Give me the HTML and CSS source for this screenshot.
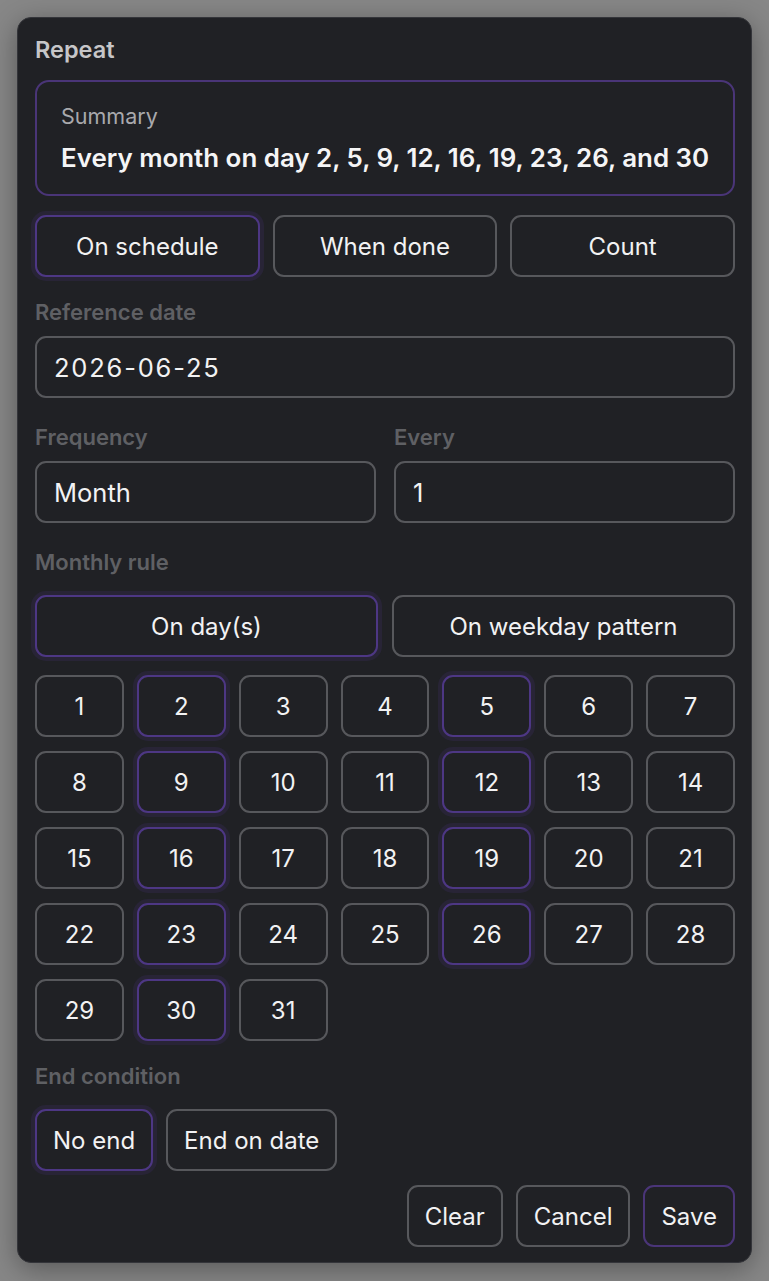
FILE: index.html
```html
<!DOCTYPE html>
<html lang="en">
<head>
  <meta charset="UTF-8" />
  <meta name="viewport" content="width=device-width, initial-scale=1.0" />
  <title>Repeat</title>
  <link rel="stylesheet" href="styles.css">
</head>
<body>
  <div class="dialog">
    <h2 class="title">Repeat</h2>

    <div class="summary">
      <div class="summary-label">Summary</div>
      <div class="summary-text">Every month on day 2, 5, 9, 12, 16, 19, 23, 26, and 30</div>
    </div>

    <div class="seg seg-3 mode">
      <button class="btn active">On schedule</button>
      <button class="btn">When done</button>
      <button class="btn">Count</button>
    </div>

    <div class="field">
      <label class="label">Reference date</label>
      <div class="input date">2026-06-25</div>
    </div>

    <div class="row-2">
      <div class="field">
        <label class="label">Frequency</label>
        <div class="input">Month</div>
      </div>
      <div class="field">
        <label class="label">Every</label>
        <div class="input">1</div>
      </div>
    </div>

    <div class="field">
      <label class="label">Monthly rule</label>
      <div class="seg seg-2 group">
        <button class="btn active">On day(s)</button>
        <button class="btn">On weekday pattern</button>
      </div>
    </div>

    <div class="days" id="days"></div>

    <div class="field end">
      <label class="label">End condition</label>
      <div class="inline group">
        <button class="btn pill active">No end</button>
        <button class="btn pill">End on date</button>
      </div>
    </div>

    <div class="actions">
      <button class="btn pill">Clear</button>
      <button class="btn pill">Cancel</button>
      <button class="btn pill primary">Save</button>
    </div>
  </div>

  <script>
    const days = document.getElementById('days');
    const picked = [2, 5, 9, 12, 16, 19, 23, 26, 30];

    for (let d = 1; d <= 31; d++) {
      const b = document.createElement('button');
      b.className = 'btn day' + (picked.includes(d) ? ' active' : '');
      b.textContent = d;
      days.appendChild(b);
    }
  </script>
</body>
</html>
```

FILE: styles.css
```css
* {
  margin: 0;
  padding: 0;
  box-sizing: border-box;
}

body {
  font-family: 'Inter', 'Noto Sans', sans-serif;
  background: #878787;
  padding: 17px;
  min-height: 100vh;
}

.dialog {
  width: 735px;
  background: #202125;
  border: 1px solid #34353a;
  border-radius: 14px;
  padding: 17px 16px 15px 17px;
  box-shadow: 0 6px 28px rgba(0, 0, 0, 0.35);
  color: #f2f2f3;
}

.title {
  font-size: 23.5px;
  font-weight: 600;
  line-height: 30px;
  color: #c6c6c8;
}

.summary {
  margin-top: 15px;
  border: 2px solid #4a3578;
  border-radius: 14px;
  padding: 20px 10px 21px 24px;
}

.summary-label {
  font-size: 21.5px;
  line-height: 28px;
  color: #a9a9ad;
}

.summary-text {
  margin-top: 13px;
  font-size: 25.9px;
  font-weight: 600;
  line-height: 30px;
  color: #f5f5f6;
  white-space: nowrap;
}

.btn {
  font-family: inherit;
  font-size: 24px;
  color: #f2f2f3;
  background: #202125;
  border: 2px solid #57585c;
  border-radius: 11px;
  height: 62px;
  cursor: pointer;
}

.btn.active {
  border-color: #4d3784;
  box-shadow: 0 0 0 4px rgba(70, 50, 120, 0.22);
}

.btn.primary {
  border-color: #4a3578;
}

.seg {
  display: grid;
  gap: 13px;
}

.seg-3 {
  grid-template-columns: repeat(3, 1fr);
}

.seg-2 {
  grid-template-columns: repeat(2, 1fr);
  gap: 14px;
}

.mode {
  margin-top: 19px;
}

.field {
  display: flex;
  flex-direction: column;
  margin-top: 23px;
}

.label {
  font-size: 22px;
  font-weight: 600;
  line-height: 24px;
  color: #5f6064;
  margin-bottom: 12px;
}

.input {
  height: 62px;
  border: 2px solid #57585c;
  border-radius: 11px;
  padding: 0 17px;
  display: flex;
  align-items: center;
  font-size: 25.5px;
  color: #f2f2f3;
}

.date {
  letter-spacing: 1.8px;
}

.row-2 {
  display: grid;
  grid-template-columns: 1fr 1fr;
  gap: 18px;
  margin-top: 4px;
}

.row-2 .field {
  margin-top: 23px;
}

.row-2 + .field {
  margin-top: 27px;
}

.group {
  margin-top: 9px;
}

.days {
  display: grid;
  grid-template-columns: repeat(7, 1fr);
  gap: 14px 13px;
  margin-top: 18px;
}

.inline {
  display: flex;
  gap: 13px;
}

.pill {
  padding: 0 16px;
}

.actions {
  display: flex;
  justify-content: flex-end;
  gap: 13px;
  margin-top: 14px;
}
```
